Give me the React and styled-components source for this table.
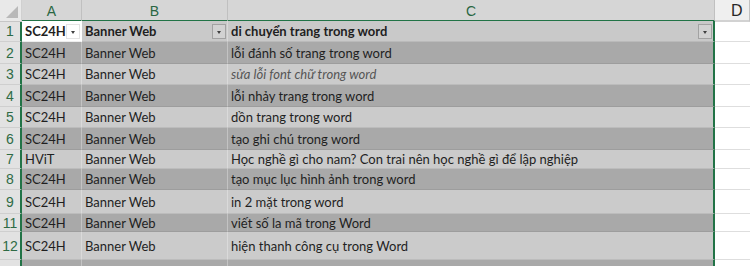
import React from 'react';
import styled, { createGlobalStyle } from 'styled-components';

const GlobalStyle = createGlobalStyle`
  body {
    margin: 0;
    background: #ffffff;
    overflow: hidden;
  }
`;

const GREEN = '#217346';
const COLS = '22px 60px 146px 487px 1fr';

const Sheet = styled.div`
  width: 750px;
  height: 266px;
  overflow: hidden;
  font-family: Lato, 'Liberation Sans', sans-serif;
  font-size: 13px;
  color: #1f1f1f;
  background: #ffffff;
`;

const HeaderBar = styled.div`
  display: grid;
  grid-template-columns: ${COLS};
  height: 21px;
`;

const Corner = styled.div`
  position: relative;
  background: #e9e9e9;
  border-right: 1px solid #d0d0d0;
  border-bottom: 1px solid #c6c6c6;

  &::after {
    content: '';
    position: absolute;
    right: 3px;
    bottom: 3px;
    width: 0;
    height: 0;
    border-left: 12px solid transparent;
    border-bottom: 12px solid #b9b9b9;
  }
`;

const ColLetter = styled.div`
  display: flex;
  align-items: center;
  justify-content: ${p => (p.$d ? 'flex-start' : 'center')};
  padding-top: 2px;
  padding-left: ${p => (p.$d ? '16px' : '0')};
  background: ${p => (p.$selected ? '#d6d6d6' : '#efefef')};
  color: ${p => (p.$selected ? '#2a6642' : '#262626')};
  border-right: 1px solid #c0c0c0;
  border-bottom: 2px solid ${p => (p.$selected ? GREEN : '#d2d2d2')};
  font-family: 'Liberation Sans', sans-serif;
  font-size: ${p => (p.$d ? '16px' : '14px')};
  box-sizing: border-box;
`;

const Row = styled.div`
  display: grid;
  grid-template-columns: ${COLS};
  height: ${p => p.$h}px;
`;

const RowNum = styled.div`
  display: flex;
  align-items: center;
  justify-content: center;
  background: #e2e2e2;
  color: #2f6b45;
  font-family: 'Liberation Sans', sans-serif;
  font-size: 14px;
  border-bottom: 1px solid #cfcfcf;
  border-right: 2px solid ${GREEN};
  box-sizing: border-box;
`;

const bandColor = {
  head: '#c9c9c9',
  dark: '#a9a9a9',
  light: '#cbcbcb',
};

const Cell = styled.div`
  display: flex;
  align-items: center;
  justify-content: space-between;
  padding-left: 3px;
  padding-right: 1px;
  overflow: hidden;
  white-space: nowrap;
  box-sizing: border-box;
  background: ${p => (p.$active ? '#ffffff' : bandColor[p.$band])};
  border-bottom: 1px solid rgba(0, 0, 0, 0.07);
  border-right: 1px solid rgba(255, 255, 255, 0.3);
  font-weight: ${p => (p.$bold ? 700 : 400)};
  font-style: ${p => (p.$italic ? 'italic' : 'normal')};
  color: ${p => (p.$italic ? '#555555' : '#1f1f1f')};
  ${p => p.$last && `border-right: 2px solid ${GREEN};`}
`;

const EmptyCell = styled.div`
  border-bottom: 1px solid #dedede;
`;

const FilterButton = styled.span`
  flex: none;
  position: relative;
  width: 14px;
  height: 15px;
  box-sizing: border-box;
  border: 1px solid ${p => (p.$white ? '#e4e4e4' : '#a2a2a2')};
  background: ${p => (p.$white ? '#ffffff' : '#d2d2d2')};

  &::after {
    content: '';
    position: absolute;
    left: 4px;
    top: 6px;
    border-left: 2.5px solid transparent;
    border-right: 2.5px solid transparent;
    border-top: 3px solid #404040;
  }
`;

const rows = [
  { n: 1, h: 21, band: 'head', a: 'SC24H', b: 'Banner Web', c: 'di chuyển trang trong word' },
  { n: 2, h: 22, band: 'dark', c: 'lỗi đánh số trang trong word' },
  { n: 3, h: 21, band: 'light', c: 'sửa lỗi font chữ trong word', italic: true },
  { n: 4, h: 22, band: 'dark', c: 'lỗi nhảy trang trong word' },
  { n: 5, h: 21, band: 'light', c: 'dồn trang trong word' },
  { n: 6, h: 22, band: 'dark', c: 'tạo ghi chú trong word' },
  { n: 7, h: 19, band: 'light', a: 'HViT', c: 'Học nghề gì cho nam? Con trai nên học nghề gì để lập nghiệp' },
  { n: 8, h: 21, band: 'dark', c: 'tạo mục lục hình ảnh trong word' },
  { n: 9, h: 24, band: 'light', c: 'in 2 mặt trong word' },
  { n: 11, h: 18, band: 'dark', c: 'viết số la mã trong Word' },
  { n: 12, h: 28, band: 'light', c: 'hiện thanh công cụ trong Word' },
  { n: 13, h: 22, band: 'dark', c: 'chèn ký tự đặc biệt trong Word' },
];

const App = () => {
  return (
    <Sheet>
      <GlobalStyle />
      <HeaderBar>
        <Corner />
        <ColLetter $selected>A</ColLetter>
        <ColLetter $selected>B</ColLetter>
        <ColLetter $selected>C</ColLetter>
        <ColLetter $d>D</ColLetter>
      </HeaderBar>
      {rows.map(r => {
        const head = r.band === 'head';
        return (
          <Row key={r.n} $h={r.h}>
            <RowNum>{r.n}</RowNum>
            <Cell $band={r.band} $bold={head} $active={head}>
              {r.a || 'SC24H'}
              {head && <FilterButton $white />}
            </Cell>
            <Cell $band={r.band} $bold={head}>
              {r.b || 'Banner Web'}
              {head && <FilterButton />}
            </Cell>
            <Cell $band={r.band} $bold={head} $italic={r.italic} $last>
              {r.c}
              {head && <FilterButton />}
            </Cell>
            <EmptyCell />
          </Row>
        );
      })}
    </Sheet>
  );
};

export default App;
